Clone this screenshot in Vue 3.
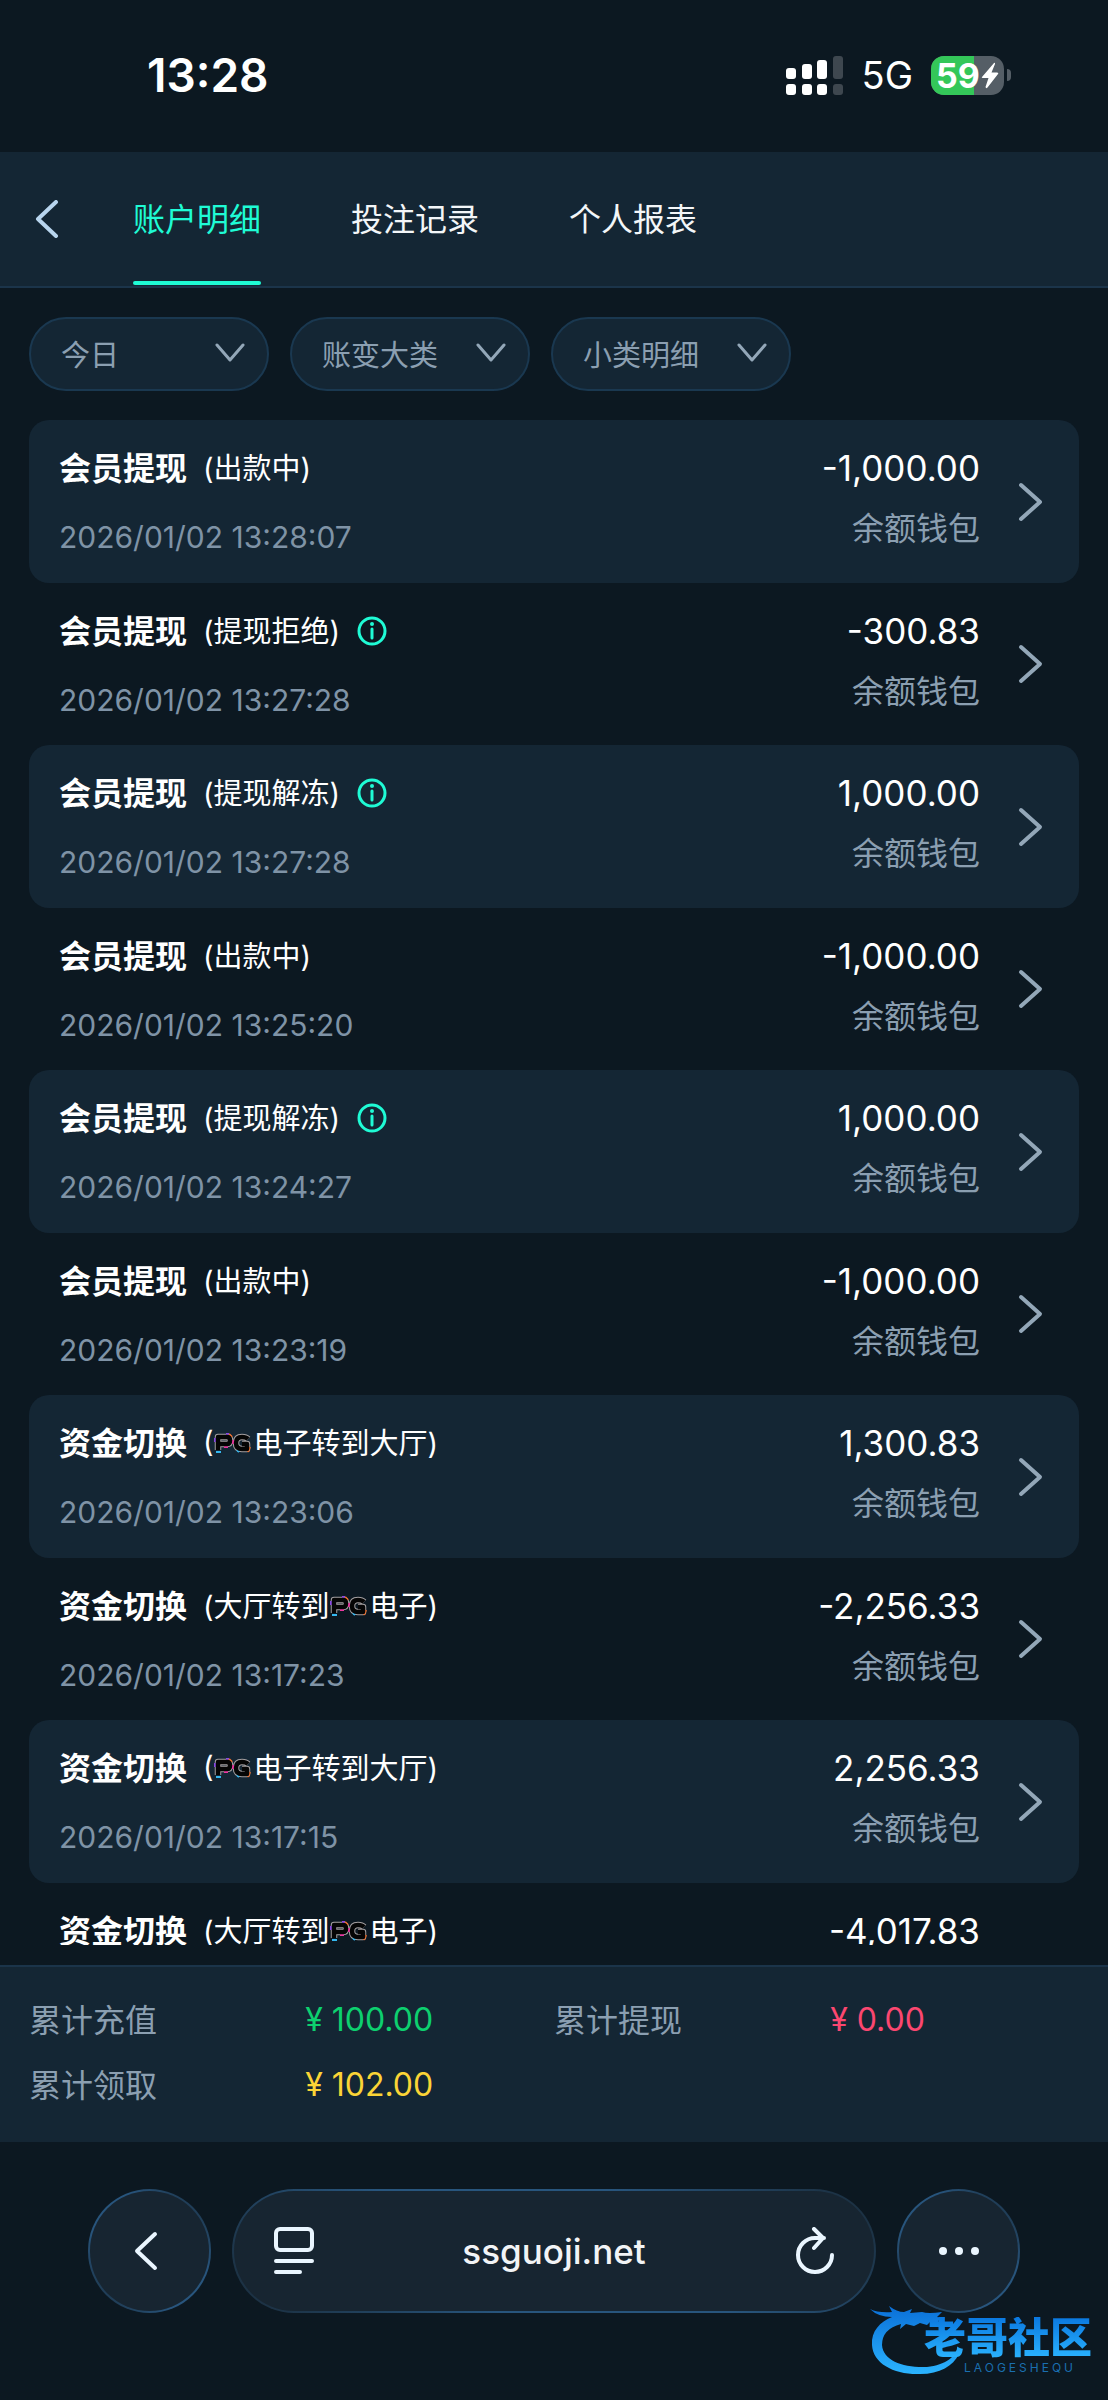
<template>
  <div class="page">
    <!-- status bar -->
    <div class="status-bar">
      <div class="clock">13:28</div>
      <div class="status-right">
        <svg class="signal" viewBox="0 0 58 39" aria-hidden="true">
          <g fill="#fff">
            <rect x="0" y="12" width="10" height="11" rx="3" />
            <rect x="16" y="8" width="10" height="15" rx="3" />
            <rect x="31" y="4" width="10" height="19" rx="3" />
            <rect x="0" y="28" width="10" height="11" rx="3" />
            <rect x="16" y="28" width="10" height="11" rx="3" />
            <rect x="31" y="28" width="10" height="11" rx="3" />
          </g>
          <g fill="#3e474f">
            <rect x="47" y="0" width="10" height="23" rx="3" />
            <rect x="47" y="28" width="10" height="11" rx="3" />
          </g>
        </svg>
        <span class="network">5G</span>
        <div class="battery">
          <div class="battery-body">
            <div class="battery-fill" :style="{ width: battery + '%' }"></div>
            <span class="battery-num">{{ battery }}</span>
            <svg class="bolt" viewBox="0 0 18 27" aria-hidden="true">
              <path d="M13 1 L1 15 Q0 16 2 16 H7.500 L4.500 25 Q5 27 6.500 25.500 L17 12 Q18 10.500 16 10.500 H10.500 L14 2 Q14.200 0 13 1Z" fill="#fff" />
            </svg>
          </div>
          <div class="battery-cap"></div>
        </div>
      </div>
    </div>

    <!-- header tabs -->
    <header class="header">
      <button class="back" aria-label="返回">
        <svg viewBox="0 0 24 38"><path d="M21 2 L3 19 L21 36" /></svg>
      </button>
      <nav class="tabs">
        <button v-for="t in tabs" :key="t.key" :class="['tab', { active: activeTab === t.key }]" @click="activeTab = t.key">{{ t.label }}</button>
      </nav>
    </header>

    <!-- filters -->
    <div class="filters">
      <button v-for="f in filters" :key="f" class="filter">
        <span>{{ f }}</span>
        <svg viewBox="0 0 30 20" aria-hidden="true"><path d="M2 2 L15 17 L28 2" /></svg>
      </button>
    </div>

    <!-- records -->
    <ul class="list">
      <li v-for="(r, idx) in records" :key="idx" class="row">
        <div class="row-left">
          <div class="title">
            <strong>{{ r.title }}</strong>
            <span class="note">({{ r.before }}<svg v-if="r.pg" class="pg" viewBox="0 0 38 20" role="img" aria-label="PG">
              <g fill="none" stroke-linejoin="round">
                <g stroke="#a5a0a2" stroke-width="6.500">
                  <path d="M4 17 V4 H13 Q16 4 16 7.500 Q16 11 13 11 H6" />
                  <path d="M34 6 Q32 4 28 4 Q22 4 22 10 Q22 16 28 16 H33 V11 H28" />
                </g>
                <path d="M12 1 H15 M1 9 V5" stroke="#8a4be0" stroke-width="2" />
                <path d="M2 19 H7 M23 17 L25 19" stroke="#35b8f0" stroke-width="2" />
                <path d="M15 1 L18 4 M34 19 L36 14" stroke="#f0702e" stroke-width="2" />
                <path d="M19 7 V11 M10 14 H14" stroke="#e83aa0" stroke-width="2" />
                <g stroke="#050505" stroke-width="4.500">
                  <path d="M4 17 V4 H13 Q16 4 16 7.500 Q16 11 13 11 H6" />
                  <path d="M34 6 Q32 4 28 4 Q22 4 22 10 Q22 16 28 16 H33 V11 H28" />
                </g>
              </g>
            </svg>{{ r.after }})</span>
            <svg v-if="r.info" class="info" viewBox="0 0 30 30" aria-hidden="true">
              <circle cx="15" cy="15" r="13" fill="none" stroke="#1ffbd5" stroke-width="3" />
              <circle cx="15" cy="8" r="2" fill="#1ffbd5" />
              <path d="M15 13 V22" stroke="#1ffbd5" stroke-width="3" stroke-linecap="round" />
            </svg>
          </div>
          <div v-if="r.time" class="time">{{ r.time }}</div>
        </div>
        <div class="row-right">
          <div class="amount">{{ r.amount }}</div>
          <div v-if="r.time" class="wallet">余额钱包</div>
        </div>
        <svg class="arrow" viewBox="0 0 26 40" aria-hidden="true"><path d="M3 3 L22 20 L3 37" /></svg>
      </li>
    </ul>

    <!-- totals -->
    <dl class="totals">
      <template v-for="s in totals" :key="s.label">
        <dt>{{ s.label }}</dt>
        <dd :class="s.color">¥ {{ s.value }}</dd>
      </template>
    </dl>

    <!-- browser bar -->
    <footer class="browser">
      <button class="glass round" aria-label="后退">
        <svg class="nav-back" viewBox="0 0 32 40"><path d="M21 3 L3 20 L21 37" /></svg>
      </button>
      <div class="glass address">
        <svg class="reader" viewBox="0 0 40 48" aria-hidden="true">
          <rect x="2" y="2" width="36" height="21" rx="4" />
          <path d="M2 34 H38 M2 45 H26" />
        </svg>
        <span class="url">ssguoji.net</span>
        <svg class="reload" viewBox="0 0 40 48" aria-hidden="true">
          <path d="M38 28 A17 17 0 1 1 21 11 H30 M20 2 L29 11 L20 21" />
        </svg>
      </div>
      <button class="glass round" aria-label="更多">
        <svg class="dots" viewBox="0 0 42 10">
          <circle cx="5" cy="5" r="4" /><circle cx="21" cy="5" r="4" /><circle cx="37" cy="5" r="4" />
        </svg>
      </button>
      <div class="brand">
        <svg class="dragon" viewBox="0 0 90 72" aria-hidden="true">
          <defs>
            <linearGradient id="dragonFill" x1="0" y1="0" x2="0" y2="1">
              <stop offset="0" stop-color="#0a6fd8" />
              <stop offset="1" stop-color="#2bb4ff" />
            </linearGradient>
          </defs>
          <path fill="url(#dragonFill)" d="M0 5 Q8 9 22 8 L19 2 Q27 8 34 8 L42 5 L40 9 L52 8 Q58 10 72 8 L67 13 L73 14 L68 17 L71 21 L60 18 L57 21 L50 19 L44 22 L36 20 L30 25 L31 20 Q12 25 12 41 C13 57 34 64 57 63 C76 61 86 52 88 43 L89 50 C83 62 70 70 50 70 C25 71 3 60 2 41 C1 27 10 18 22 13 Q8 13 0 5Z" />
        </svg>
        <div class="brand-name">老哥社区</div>
        <div class="brand-sub">LAOGESHEQU</div>
      </div>
    </footer>
  </div>
</template>

<script setup>
import { ref } from 'vue'

const battery = 59

const tabs = [
  { key: 'account', label: '账户明细' },
  { key: 'bet', label: '投注记录' },
  { key: 'report', label: '个人报表' }
]
const activeTab = ref('account')

const filters = ['今日', '账变大类', '小类明细']

const records = [
  { title: '会员提现', before: '出款中', time: '2026/01/02 13:28:07', amount: '-1,000.00' },
  { title: '会员提现', before: '提现拒绝', info: true, time: '2026/01/02 13:27:28', amount: '-300.83' },
  { title: '会员提现', before: '提现解冻', info: true, time: '2026/01/02 13:27:28', amount: '1,000.00' },
  { title: '会员提现', before: '出款中', time: '2026/01/02 13:25:20', amount: '-1,000.00' },
  { title: '会员提现', before: '提现解冻', info: true, time: '2026/01/02 13:24:27', amount: '1,000.00' },
  { title: '会员提现', before: '出款中', time: '2026/01/02 13:23:19', amount: '-1,000.00' },
  { title: '资金切换', pg: true, after: '电子转到大厅', time: '2026/01/02 13:23:06', amount: '1,300.83' },
  { title: '资金切换', before: '大厅转到', pg: true, after: '电子', time: '2026/01/02 13:17:23', amount: '-2,256.33' },
  { title: '资金切换', pg: true, after: '电子转到大厅', time: '2026/01/02 13:17:15', amount: '2,256.33' },
  { title: '资金切换', before: '大厅转到', pg: true, after: '电子', time: '', amount: '-4,017.83' }
]

const totals = [
  { label: '累计充值', value: '100.00', color: 'green' },
  { label: '累计提现', value: '0.00', color: 'red' },
  { label: '累计领取', value: '102.00', color: 'yellow' }
]
</script>

<style>
body { background: #0c1821 }
</style>

<style scoped>
.page { height: 100vh; display: flex; flex-direction: column; background: #0c1821; color: #fff; font-family: Inter, "Noto Sans CJK SC", sans-serif; font-size: 32px }
button { font: inherit; color: inherit; background: none; border: none; padding: 0; cursor: pointer }
svg { flex: none; display: block }

.status-bar { flex: none; height: 152px; box-sizing: border-box; padding: 0 97px 2px 147px; display: flex; align-items: center; justify-content: space-between }
.clock { font-size: 46px; font-weight: 600 }
.status-right { display: flex; align-items: center }
.signal { width: 58px; height: 39px }
.network { font-size: 38px; margin: 0 18px }
.battery { display: flex; align-items: center; gap: 3px }
.battery-body { position: relative; width: 73px; height: 39px; border-radius: 13px; overflow: hidden; background: #555e66; display: flex; align-items: center; justify-content: center; gap: 1px }
.battery-fill { position: absolute; left: 0; top: 0; bottom: 0; background: #34c759 }
.battery-num { position: relative; font-size: 34px; line-height: 39px; font-weight: 700 }
.bolt { position: relative; width: 18px; height: 27px }
.battery-cap { width: 4px; height: 12px; border-radius: 0 4px 4px 0; background: #555e66 }

.header { flex: none; height: 136px; box-sizing: border-box; border-bottom: 2px solid #1b344a; background: #142634; display: flex; padding-left: 35px }
.back { width: 24px; margin-right: 74px }
.back svg { width: 24px; height: 38px; fill: none; stroke: #b8d5ee; stroke-width: 4; stroke-linecap: round; stroke-linejoin: round }
.tabs { display: flex; gap: 90px }
.tab { position: relative; padding-bottom: 4px; color: #f3f6f8 }
.tab.active { color: #1ffbd5 }
.tab.active::after { content: ''; position: absolute; left: 0; right: 0; bottom: 1px; height: 4px; border-radius: 2px; background: #1ffbd5 }

.filters { flex: none; display: flex; gap: 21px; padding: 29px 29px 29px }
.filter { width: 240px; height: 74px; box-sizing: border-box; border: 2px solid #1a3850; border-radius: 37px; background: #142634; color: #8b9fb1; font-size: 29px; padding: 0 22px 2px 30px; display: flex; align-items: center; justify-content: space-between }
.filter svg { width: 30px; height: 20px; fill: none; stroke: #93a7b8; stroke-width: 3; stroke-linecap: round; stroke-linejoin: round }

.list { flex: 1; min-height: 0; overflow: hidden; list-style: none; margin: 0 29px 20px; padding: 0 }
.row { height: 162px; box-sizing: border-box; padding: 24px 35px 24px 30px; border-radius: 20px; display: flex }
.row:nth-child(odd) { height: 163px; background: #142634 }
.row-left { flex: 1 }
.title { display: flex; align-items: center; height: 44px }
.title strong { font-weight: 700 }
.note { margin-left: 16px; font-size: 29px; display: flex; align-items: center }
.pg { width: 38px; height: 20px; margin: 4px 2px 0 0 }
.info { width: 30px; height: 30px; margin: 4px 0 0 17px }
.time { margin-top: 29px; font-size: 30px; line-height: 40px; color: #7f93a6 }
.row-right { text-align: right; margin-right: 38px }
.amount { font-size: 35px; line-height: 48px }
.wallet { line-height: 48px; margin-top: 13px; color: #8b9fb1 }
.arrow { width: 26px; height: 40px; align-self: center; fill: none; stroke: #93a7b8; stroke-width: 4; stroke-linecap: round; stroke-linejoin: round }

.totals { flex: none; margin: 0; height: 177px; box-sizing: border-box; padding: 20px 29px; border-top: 2px solid #1b344a; background: #142634; display: grid; grid-template-columns: 263fr 237fr 263fr 237fr; grid-auto-rows: 65px; align-items: center }
.totals dt { padding-bottom: 4px; color: #8b9fb1 }
.totals dd { margin: 0 }
.green { color: #0dd06f }
.red { color: #fb4770 }
.yellow { color: #fbd436 }

.browser { flex: none; position: relative; height: 258px; box-sizing: border-box; padding: 47px 88px; display: flex; gap: 21px }
.glass { height: 124px; box-sizing: border-box; border-radius: 62px; border: 2px solid transparent; background: linear-gradient(#172531, #172531) padding-box, linear-gradient(45deg, #1a2c3b, #28557d 35%, #28557d 65%, #1a2c3b) border-box; display: flex; align-items: center; justify-content: center }
.glass svg { fill: none; stroke: #eaf6ff; stroke-width: 4; stroke-linecap: round; stroke-linejoin: round }
.round { width: 123px }
.nav-back { width: 32px; height: 40px }
.address { flex: 1; justify-content: space-between; padding: 0 40px }
.reader, .reload { width: 40px; height: 48px }
.url { font-size: 35px; font-weight: 500; color: #f2f4f6 }
.dots { width: 42px; height: 10px }
.glass .dots { fill: #eaf6ff; stroke: none }
.brand { position: absolute; right: 16px; bottom: 24px; width: 222px; height: 72px }
.dragon { position: absolute; left: 0; top: 0; width: 90px; height: 72px }
.brand-name { position: absolute; right: 0; top: 13px; font-size: 42px; line-height: 42px; font-weight: 900; background: linear-gradient(#0a78e0, #2bb4ff); -webkit-background-clip: text; background-clip: text; color: transparent }
.brand-sub { position: absolute; right: 16px; bottom: 2px; font-size: 12px; line-height: 12px; letter-spacing: 3px; color: #1a6fb0 }
</style>
